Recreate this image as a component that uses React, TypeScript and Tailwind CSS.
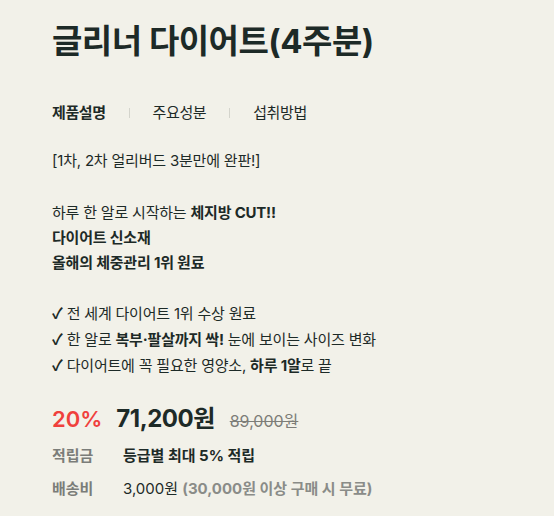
import React from "react";

const font = { fontFamily: 'Inter, "Noto Sans CJK KR", sans-serif' };

function Check() {
  return (
    <span className="font-bold" style={{ fontFamily: '"Noto Sans CJK KR", sans-serif' }}>
      ✓
    </span>
  );
}

export default function App() {
  return (
    <div
      className="w-[554px] h-[516px] bg-[#f2f1e9] text-[#1d2a27] pl-[52px] pt-[17px] overflow-hidden"
      style={font}
    >
      <h1 className="text-[33px] font-bold leading-[48px] tracking-[-0.5px]">글리너 다이어트(4주분)</h1>

      <div className="flex items-center mt-[37px] text-[15px] leading-[22px] h-[22px]">
        <span className="font-bold tracking-[-0.4px]">제품설명</span>
        <span className="w-px h-[10px] bg-[#d4d4cc] mx-[23px]" />
        <span className="tracking-[-0.4px]">주요성분</span>
        <span className="w-px h-[10px] bg-[#d4d4cc] mx-[23px]" />
        <span className="tracking-[-0.4px]">섭취방법</span>
      </div>

      <div className="mt-[24px] text-[15px] leading-[25px] tracking-[-0.2px]">
        <p>[1차, 2차 얼리버드 3분만에 완판!]</p>
        <p className="h-[27px]" />
        <p>
          하루 한 알로 시작하는 <b>체지방 CUT!!</b>
        </p>
        <p className="font-bold">다이어트 신소재</p>
        <p className="font-bold">올해의 체중관리 1위 원료</p>
        <p className="h-[25px]" />
        <p>
          <Check /> 전 세계 다이어트 1위 수상 원료
        </p>
        <p>
          <Check /> 한 알로 <b>복부·팔살까지 싹!</b> 눈에 보이는 사이즈 변화
        </p>
        <p>
          <Check /> 다이어트에 꼭 필요한 영양소, <b>하루 1알</b>로 끝
        </p>
      </div>

      <div className="flex items-baseline mt-[23px] h-[36px]">
        <span className="text-[22px] font-semibold text-[#f0403c]">20%</span>
        <span className="text-[24px] font-bold ml-[14px] tracking-[-0.5px]">71,200원</span>
        <span className="text-[16px] text-[#7d7d78] line-through ml-[15px]">89,000원</span>
      </div>

      <div className="mt-[2px] text-[15px] leading-[33px]">
        <div className="flex">
          <span className="w-[71px] font-semibold text-[#7b7d79]">적립금</span>
          <span className="font-bold">등급별 최대 5% 적립</span>
        </div>
        <div className="flex">
          <span className="w-[71px] font-semibold text-[#7b7d79]">배송비</span>
          <span>
            3,000원 <b className="text-[#8a8c88]">(30,000원 이상 구매 시 무료)</b>
          </span>
        </div>
      </div>
    </div>
  );
}
